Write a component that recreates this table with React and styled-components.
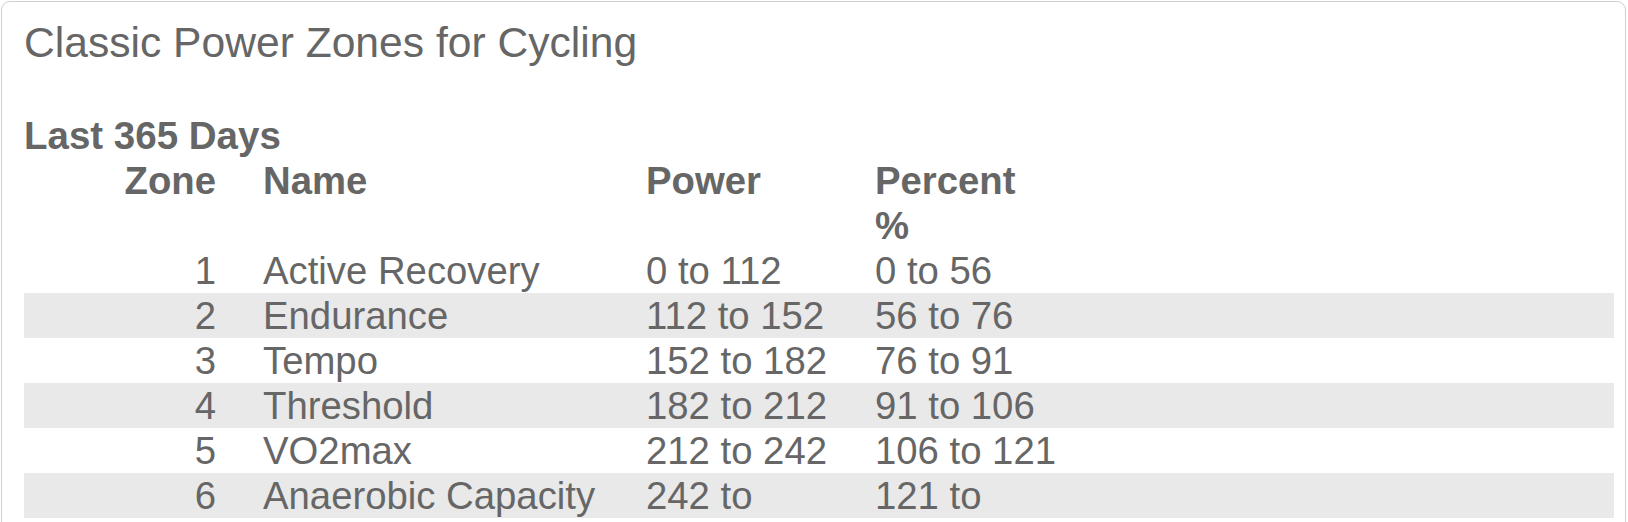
import React from "react";
import styled, { createGlobalStyle } from "styled-components";

const GlobalStyle = createGlobalStyle`
  html, body {
    margin: 0;
    padding: 0;
    background: #fff;
  }
  body {
    font-family: "Liberation Sans", Arial, Helvetica, sans-serif;
    color: #666;
  }
`;

const Card = styled.div`
  margin: 1px 2px 0 1px;
  padding: 15px 11px 24px 22px;
  border: 1px solid #cfcfcf;
  border-radius: 9px;
  background: #fff;
`;

const Title = styled.h2`
  margin: 0 0 46px 0;
  font-size: 42.6px;
  line-height: 50px;
  font-weight: normal;
  color: #666;
`;

const Period = styled.h3`
  margin: 0;
  font-size: 38.5px;
  line-height: 45px;
  font-weight: bold;
  color: #666;
`;

const Table = styled.div`
  display: grid;
  grid-template-columns: 192px 383px 229px 229px 1fr;
  font-size: 38.3px;
  line-height: 45px;
`;

// display: contents so the cells sit in the table grid; the stripe is on each cell
const Row = styled.div`
  display: contents;
  & > * {
    background: ${(p) => (p.$striped ? "#e9e9e9" : "transparent")};
  }
`;

const Cell = styled.div`
  white-space: nowrap;
  padding-left: ${(p) => (p.$first ? "0" : "47px")};
  text-align: ${(p) => (p.$first ? "right" : "left")};
  font-weight: ${(p) => (p.$head ? "bold" : "normal")};
`;

const zones = [
  [1, "Active Recovery", "0 to 112", "0 to 56"],
  [2, "Endurance", "112 to 152", "56 to 76"],
  [3, "Tempo", "152 to 182", "76 to 91"],
  [4, "Threshold", "182 to 212", "91 to 106"],
  [5, "VO2max", "212 to 242", "106 to 121"],
  [6, "Anaerobic Capacity", "242 to", "121 to"],
];

const App = () => {
  return (
    <>
      <GlobalStyle />
      <Card>
        <Title>Classic Power Zones for Cycling</Title>
        <Period>Last 365 Days</Period>
        <Table>
          <Row>
            <Cell $head $first>Zone</Cell>
            <Cell $head>Name</Cell>
            <Cell $head>Power</Cell>
            <Cell $head>
              Percent
              <br />%
            </Cell>
            <Cell />
          </Row>
          {zones.map(([zone, name, power, pct]) => (
            <Row key={zone} $striped={zone % 2 === 0}>
              <Cell $first>{zone}</Cell>
              <Cell>{name}</Cell>
              <Cell>{power}</Cell>
              <Cell>{pct}</Cell>
              <Cell />
            </Row>
          ))}
        </Table>
      </Card>
    </>
  );
};

export default App;
